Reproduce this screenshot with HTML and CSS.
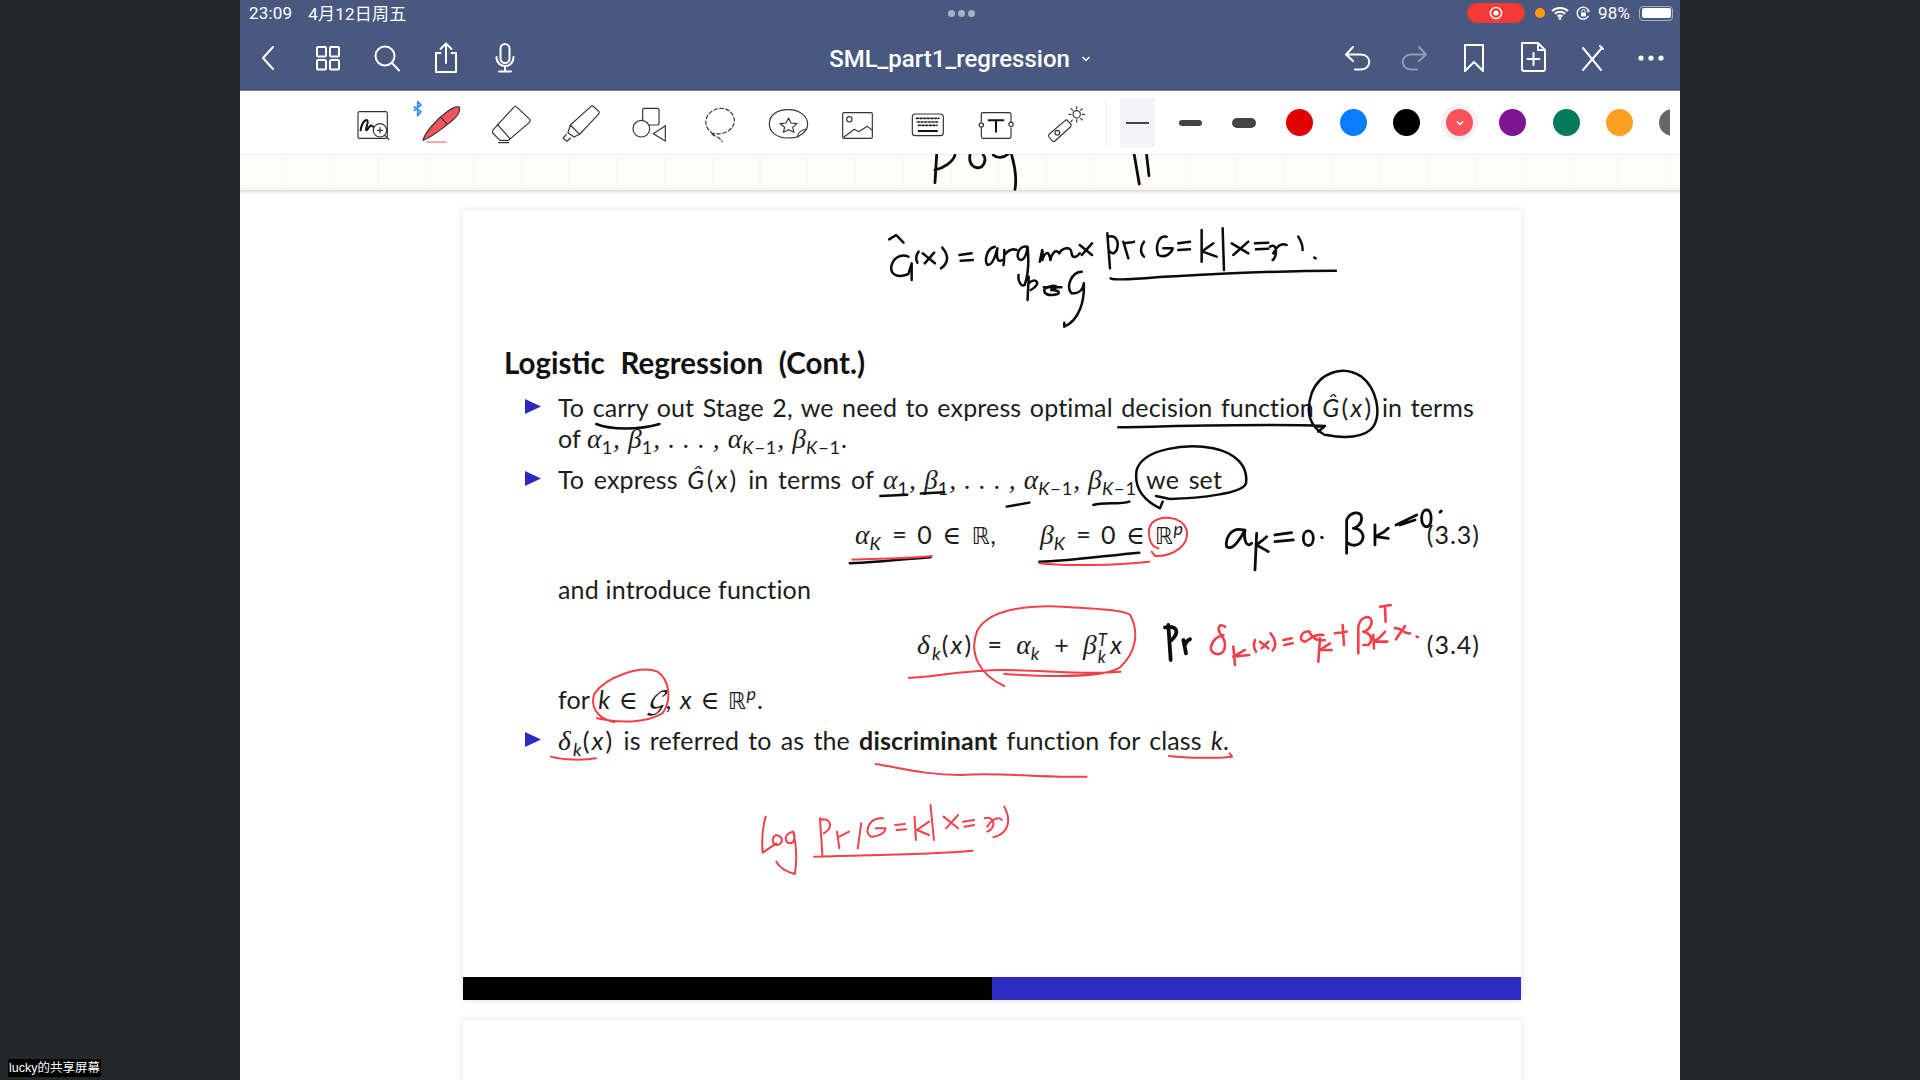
FILE: index.html
```html
<!DOCTYPE html>
<html lang="en">
<head>
<meta charset="utf-8">
<title>SML_part1_regression</title>
<link rel="stylesheet" href="styles.css">
</head>
<body>
<div class="ipad">
  <header class="chrome">
    <div class="status">
      <div class="status-left"><span>23:09</span><span class="date">4月12日周五</span></div>
      <div class="dots"><i></i><i></i><i></i></div>
      <div class="status-right">
        <span class="rec"><svg width="14" height="14" viewBox="0 0 14 14"><circle cx="7" cy="7" r="5.6" fill="none" stroke="#fff" stroke-width="1.5"/><circle cx="7" cy="7" r="2.6" fill="#fff"/></svg></span>
        <span class="dot-orange"></span>
        <svg class="wifi" width="18" height="14" viewBox="0 0 18 14"><path d="M1 5C5.500 1 12.500 1 17 5M3.800 7.800C6.800 5.200 11.200 5.200 14.200 7.800M6.500 10.400C8 9.200 10 9.200 11.500 10.400" fill="none" stroke="#fff" stroke-width="2"/><circle cx="9" cy="12.500" r="1.400" fill="#fff"/></svg>
        <svg class="lock" width="15" height="15" viewBox="0 0 15 15"><path d="M12.500 10A6 6 0 1 1 13 5.500" fill="none" stroke="#fff" stroke-width="1.400"/><path d="M13.500 3.500L13 6.500L10.500 5Z" fill="#fff"/><rect x="5" y="6.500" width="5" height="4" rx=".8" fill="#fff"/><path d="M5.800 6.500V5.200a1.700 1.700 0 0 1 3.400 0V6.500" fill="none" stroke="#fff"/></svg>
        <span class="pct">98%</span>
        <span class="battery"><span></span></span>
      </div>
    </div>
    <nav class="nav">
      <div class="nav-group">
        <span class="nav-btn"><svg viewBox="0 0 36 36"><path d="M22 7L12 18L22 29"/></svg></span>
        <span class="nav-btn"><svg viewBox="0 0 36 36"><rect x="7" y="7" width="9" height="9.500" rx="1"/><rect x="20" y="7" width="9" height="9.500" rx="1"/><rect x="7" y="20" width="9" height="9.500" rx="1"/><rect x="20" y="20" width="9" height="9.500" rx="1"/></svg></span>
        <span class="nav-btn"><svg viewBox="0 0 36 36"><circle cx="16" cy="16" r="9.500"/><path d="M23 23L30 30.500"/></svg></span>
        <span class="nav-btn"><svg viewBox="0 0 36 36"><path d="M12.500 13H8V32H28V13H23.500M18 23V4M12.500 9L18 3.500L23.500 9"/></svg></span>
        <span class="nav-btn"><svg viewBox="0 0 36 36"><rect x="13.500" y="4" width="9" height="19" rx="4.500"/><path d="M9.500 17C9.500 29 26.500 29 26.500 17M18 27V31M12 31.500H24"/></svg></span>
      </div>
      <div class="doc-title"><span>SML_part1_regression</span><svg width="10" height="8" viewBox="0 0 10 8"><path d="M1.500 2L5 5.500L8.500 2"/></svg></div>
      <div class="nav-group nav-right">
        <span class="nav-btn"><svg viewBox="0 0 36 36"><path d="M14 7L7 14.500L14 21M7 14.500H22C33 14.500 33 29.500 22 29.500H16"/></svg></span>
        <span class="nav-btn dim"><svg viewBox="0 0 36 36"><path d="M22 7L29 14.500L22 21M29 14.500H14C3 14.500 3 29.500 14 29.500H20"/></svg></span>
        <span class="nav-btn"><svg viewBox="0 0 36 36"><path d="M9 5H27V31L18 22L9 31Z"/></svg></span>
        <span class="nav-btn"><svg viewBox="0 0 36 36"><path d="M7 3H23L30 10V29Q30 31 28 31H9Q7 31 7 29ZM23 3V10H30M18.500 13V25M12.500 19H24.500"/></svg></span>
        <span class="nav-btn"><svg viewBox="0 0 36 36"><path d="M9 8L27 30M27 9L9 30M26 6L29 9"/></svg></span>
        <span class="nav-btn"><svg viewBox="0 0 36 36"><circle class="solid" cx="8" cy="18" r="2.600"/><circle class="solid" cx="18" cy="18" r="2.600"/><circle class="solid" cx="28" cy="18" r="2.600"/></svg></span>
      </div>
    </nav>
  </header>

  <div class="toolbar">
    <div class="tools">
      <svg class="tool" viewBox="9 6 180 180"><rect x="54" y="62" width="88" height="80" rx="5"/><path class="thick" d="M62 118C65 90 85 78 83 95C80 110 74 122 82 116C90 105 92 98 100 108"/><circle class="fillw" cx="120" cy="118" r="20"/><path d="M112 118H128M120 110V126M134 133L147 146"/></svg>
      <svg class="tool" viewBox="217 6 180 180"><path class="blue" d="M224 48L244 62L234 74V32L244 42L224 58"/><path class="pen" d="M250 148C256 125 290 85 322 62C340 48 358 44 360 50C362 62 350 80 330 95C305 115 270 142 250 148Z"/><path d="M250 148C256 125 290 85 322 62C340 48 358 44 360 50C362 62 350 80 330 95C305 115 270 142 250 148ZM305 80L322 100"/><path class="redline" d="M262 153H320"/></svg>
      <svg class="tool" viewBox="425 6 180 180"><path d="M530 46L572 86Q574 90 570 94L510 146Q506 150 500 148H482L460 126Q458 120 462 116L526 46Q528 44 530 46ZM474 100L512 143M478 155H508"/></svg>
      <svg class="tool" viewBox="634 6 180 180"><path d="M760 45L778 62Q780 66 776 70L720 130L692 102L754 46Q757 44 760 45ZM692 102L685 125L703 138L720 130M680 130L670 142L682 151L692 141"/></svg>
      <svg class="tool" viewBox="842 6 180 180"><rect x="910" y="52" width="49" height="50" rx="5"/><circle class="fillw" cx="906" cy="113" r="25"/><path d="M978 104V150L942 128Z"/></svg>
      <svg class="tool" viewBox="1050 6 180 180"><path class="dash" d="M1120 129C1090 110 1090 75 1120 58C1150 42 1183 60 1183 90C1183 115 1150 135 1120 127M1116 130C1125 135 1140 140 1146 152"/></svg>
      <svg class="tool" viewBox="58 6 180 180"><path d="M145 141C110 141 89 122 89 99C89 72 112 56 145 56C180 56 204 75 204 100C204 112 197 125 178 135C170 140 157 141 145 141ZM174 138C174 125 180 118 200 114"/><path d="M147 81L154 96L172 98L159 109L163 124L147 116L131 124L135 109L121 98L139 96Z"/></svg>
      <svg class="tool" viewBox="266 6 180 180"><rect x="310" y="65" width="89" height="77" rx="4"/><circle cx="330" cy="85" r="8"/><path d="M314 138L345 115L358 122L384 106L399 118"/></svg>
      <svg class="tool" viewBox="475 6 180 180"><rect x="518" y="69" width="93" height="65" rx="9"/><path class="keys" d="M530 82H598M533 93H596M536 103H592"/><path class="thick" d="M537 120H592"/></svg>
      <svg class="tool" viewBox="683 6 180 180"><path d="M726 92V70Q726 65 731 65H810Q815 65 815 70V92M726 110V136Q726 142 731 142H810Q815 142 815 136V110"/><circle cx="726" cy="102" r="6.500"/><circle cx="815" cy="100" r="6.500"/><path class="thick" d="M748 88H792M770 88V122"/></svg>
      <svg class="tool" viewBox="891 6 180 180"><path d="M982 86L996 99Q998 104 994 108L948 150Q944 153 940 150L930 138Q927 133 931 129Z"/><circle cx="955" cy="125" r="7"/><circle cx="1013" cy="70" r="11"/><path d="M1013 47V54M1013 86V93M990 70H996M1030 70H1037M996 53L1001 58M1025 82L1030 87M1030 53L1025 58M1000 87L996 92"/></svg>
    </div>
    <span class="sep"></span>
    <div class="strokes">
      <span class="stroke chip"><i class="w1"></i></span>
      <span class="stroke"><i class="w2"></i></span>
      <span class="stroke"><i class="w3"></i></span>
    </div>
    <div class="swatches">
      <span class="swatch"><i class="c-red"></i></span>
      <span class="swatch"><i class="c-blue"></i></span>
      <span class="swatch"><i class="c-black"></i></span>
      <span class="swatch selected"><i class="c-coral"><svg width="10" height="8" viewBox="0 0 10 8"><path d="M2 2.500L5 5.500L8 2.500" fill="none" stroke="#fff" stroke-width="1.500"/></svg></i></span>
      <span class="swatch"><i class="c-purple"></i></span>
      <span class="swatch"><i class="c-green"></i></span>
      <span class="swatch"><i class="c-orange"></i></span>
      <span class="swatch"><i class="c-gray"></i></span>
    </div>
  </div>

  <div class="strip"></div>

  <main class="canvas">
    <article class="slide">
      <div class="slide-body">
        <h1 class="slide-title">Logistic Regression (Cont.)</h1>
        <div class="item first">
          <span class="bullet"></span>
          <div class="item-text">
            <div class="line just w-full">To carry out Stage 2, we need to express optimal decision function <span class="fn"><span class="it">Ĝ</span>(<span class="it">x</span>)</span> in terms</div>
            <div class="line">of <span class="mgroup"><span class="m">α</span><sub>1</sub><span class="m">,</span> <span class="m">β</span><sub>1</sub><span class="m">,</span> <span class="m">.</span> <span class="m">.</span> <span class="m">.</span> <span class="m">,</span> <span class="m">α</span><sub><span class="it">K</span>−1</sub><span class="m">,</span> <span class="m">β</span><sub><span class="it">K</span>−1</sub></span>.</div>
          </div>
        </div>
        <div class="item second">
          <span class="bullet"></span>
          <div class="item-text">
            <div class="line just w-b2">To express <span class="fn"><span class="it">Ĝ</span>(<span class="it">x</span>)</span> in terms of <span class="mgroup"><span class="m">α</span><sub>1</sub><span class="m">,</span> <span class="m">β</span><sub>1</sub><span class="m">,</span> <span class="m">.</span> <span class="m">.</span> <span class="m">.</span> <span class="m">,</span> <span class="m">α</span><sub><span class="it">K</span>−1</sub><span class="m">,</span> <span class="m">β</span><sub><span class="it">K</span>−1</sub></span> we set</div>
            <div class="line eq eq33">
              <span class="eq-a"><span class="m">α</span><sub><span class="it">K</span></sub> = 0 <span class="in">∈</span> <span class="bb">ℝ</span>,</span>
              <span class="eq-b"><span class="m">β</span><sub><span class="it">K</span></sub> = 0 <span class="in">∈</span> <span class="bb">ℝ</span><sup class="it">p</sup></span>
              <span class="eq-num">(3.3)</span>
            </div>
            <div class="line just intro">and introduce function</div>
            <div class="line eq eq34">
              <span class="eq-c"><span class="fn"><span class="m">δ</span><sub><span class="it">k</span></sub>(<span class="it">x</span>)</span> = <span class="m">α</span><sub><span class="it">k</span></sub> + <span class="m">β</span><span class="stack"><span class="it">T</span><span class="it">k</span></span><span class="it">x</span></span>
              <span class="eq-num">(3.4)</span>
            </div>
            <div class="line just forline">for <span class="it">k</span> <span class="in">∈</span> <span class="cal">𝒢</span>, <span class="it">x</span> <span class="in">∈</span> <span class="bb">ℝ</span><sup class="it">p</sup>.</div>
          </div>
        </div>
        <div class="item third">
          <span class="bullet"></span>
          <div class="item-text">
            <div class="line just w-b3"><span class="fn"><span class="m">δ</span><sub><span class="it">k</span></sub>(<span class="it">x</span>)</span> is referred to as the <strong>discriminant</strong> function for class <span class="it">k</span>.</div>
          </div>
        </div>
      </div>
      <div class="slide-foot"><span class="foot-black"></span><span class="foot-blue"></span></div>
    </article>
    <article class="slide next"></article>
  </main>

  <svg class="ink" viewBox="240 0 1440 1080" aria-hidden="true">
    <g transform="translate(740 90) scale(.3333)">
      <path d="M590 195L585 278M585 240C610 235 640 215 645 195M690 195C685 225 705 240 725 230C740 215 735 200 730 195M760 195C770 205 790 205 805 192M815 195C825 230 830 270 825 298M1183 195L1198 282M1220 195L1227 257"/>
    </g>
    <g transform="translate(480 200) scale(.408 .3333)">
      <path class="fine" d="M1003 118L1020 105L1038 128M1050 170C1030 160 1012 175 1008 200C1006 225 1025 235 1050 222L1058 190L1058 240M1075 155C1068 165 1068 180 1072 188M1085 160L1115 190M1113 158L1090 190M1133 143C1150 165 1148 190 1130 205M1175 165L1205 160M1178 182L1208 180M1262 140C1240 145 1235 190 1245 195C1258 195 1265 160 1268 145C1265 170 1268 190 1280 180M1285 150C1285 170 1285 185 1283 195M1285 165C1295 150 1305 145 1315 150M1340 140C1320 135 1310 175 1325 180C1335 180 1340 160 1342 140C1345 175 1345 220 1335 255C1325 262 1318 240 1320 225M1372 185L1378 150C1380 155 1378 170 1378 180C1385 155 1395 150 1398 180C1402 160 1410 145 1420 160C1425 145 1450 135 1450 160C1452 175 1460 175 1470 160M1470 135L1500 165M1500 130L1475 165M1345 230L1342 300M1345 250C1360 230 1380 250 1350 270M1385 265C1410 250 1425 260 1400 270C1425 270 1425 285 1400 285C1385 285 1380 275 1385 265M1382 262H1425M1475 215C1450 215 1435 260 1450 280C1470 280 1478 270 1480 250C1482 300 1470 360 1432 380L1432 368"/>
      <path class="fine" d="M285 672C320 690 390 690 440 672"/>
    </g>
    <g transform="translate(1000 200) scale(.3333)">
      <path class="fine" d="M322 100L330 205M325 110C345 105 360 120 350 150C340 165 335 160 330 155M370 125L385 175M375 130C385 125 395 130 402 125M432 125C420 140 420 160 432 170M500 110C475 105 465 140 475 165C495 175 515 160 518 145L490 145M535 130L570 125M535 150L570 148M605 90L605 185M640 130C620 145 610 150 608 155L650 170M668 85L672 210M695 130L745 160M745 125L700 165M765 130L805 128M768 148L805 146M810 140C835 125 830 175 818 180M820 160C835 130 850 130 860 135M895 110C905 125 908 140 908 150M943 173L947 175M332 235C345 242 400 238 470 232C600 225 800 212 1008 212"/>
      <path class="fine" d="M975 705C930 680 915 640 935 580C960 515 1030 495 1085 530C1130 565 1145 640 1120 680C1095 715 1030 715 980 705M950 680L975 678L955 695M355 682C500 680 800 670 975 678M488 905L480 925C440 905 400 870 410 810C430 745 560 730 640 745C710 760 745 800 738 850C730 880 600 895 510 897L468 888M20 920L88 908M280 915C310 905 360 915 388 905M118 1085C200 1085 330 1065 418 1058"/>
      <path class="red" d="M475 1045C445 1040 440 990 455 970C480 945 545 945 560 990C570 1035 520 1070 465 1068L455 1055M118 1090C200 1100 350 1095 448 1085"/>
      <path d="M730 990C690 980 675 1020 680 1040C700 1055 725 1010 735 990C730 1020 740 1045 755 1030M770 1000L765 1110M800 1010C785 1025 775 1030 770 1035L805 1055M825 1005L875 998M825 1025L880 1020M925 993C905 993 905 1037 925 1037C945 1037 945 993 925 993ZM965 1012L967 1013M1040 1060L1040 960C1050 935 1085 930 1085 955C1085 975 1065 985 1060 985C1085 985 1100 1010 1080 1030C1065 1040 1050 1035 1045 1030M1125 1035L1125 975M1165 985C1145 1005 1130 1005 1128 1010L1165 1015M1188 975L1250 945M1200 975L1245 960M1280 930C1260 930 1260 980 1280 980C1298 980 1298 930 1280 930ZM1320 937L1324 933"/>
    </g>
    <g transform="scale(1.2245)">
      <path class="fine" d="M694 460C720 459 745 456 760 455M719 405L741 404M752 403L771 402"/>
      <path class="red" d="M696 457C720 456 745 456 761 454"/>
    </g>
    <g transform="translate(500 560) scale(.4848 .3333)">
      <path class="red" d="M1040 378C990 345 965 280 985 210C1010 150 1080 135 1160 140C1220 145 1290 150 1300 165C1320 220 1310 280 1280 320C1260 345 1180 355 1040 342M843 353C880 355 950 330 1040 330C1120 330 1200 345 1280 335M235 487C200 475 185 440 195 400C220 350 290 315 325 335C350 360 355 420 335 460C300 490 245 490 200 475M105 590C130 600 170 602 198 595M1380 588C1420 595 1480 595 1510 590L1505 580M775 612C830 625 880 645 950 645C1040 635 1100 655 1210 650"/>
      <path class="red" d="M548 770C540 810 540 850 542 878L570 850M570 825C560 830 560 855 572 855C585 850 585 830 570 825ZM605 815C585 820 585 850 600 850C610 845 608 825 605 815C612 860 612 910 608 942C590 935 575 920 570 905M660 775L665 885M660 780C680 770 690 800 668 820M695 815L700 865M700 830L720 815M745 790L738 865M790 775C760 770 750 820 765 830C780 830 795 820 795 805L775 805M815 795L835 792M818 810L838 808M855 770L858 840M885 785L860 810L885 825M888 735L895 840M915 770L945 805M945 765L920 805M955 785L978 780M958 800L978 795M1000 775C1020 765 1025 805 1005 815M1005 800C1015 775 1030 770 1035 780M1040 740C1055 780 1050 820 1018 832M648 890C750 885 880 885 975 872"/>
    </g>
    <g transform="translate(1150 590) scale(.3333)">
      <path class="heavy" d="M55 105L62 210M45 112C80 105 90 125 65 150M100 150L108 190M105 165C110 150 115 150 120 148"/>
      <path class="red thick-red" d="M225 110C210 100 200 110 210 130C225 150 230 165 220 185C205 200 180 190 183 170C190 145 205 140 220 135M250 170L255 225M250 200L298 195M250 200L285 180M315 150C310 165 310 175 318 185M330 155L355 175M355 155L335 175M362 130C378 150 380 170 368 182M400 150L425 145M403 165L428 160M480 125C450 120 445 155 465 155C480 150 490 130 520 135M480 130C490 145 500 155 525 150M510 145L505 215M540 160L510 180L545 180M555 130L590 125M578 105L582 165M625 190L625 110C632 75 665 75 665 95C665 115 645 125 640 125C665 130 670 150 655 165L640 165M670 135L672 175M705 125C690 145 680 150 672 155L712 155M690 50L722 45M705 48L707 95M735 115C750 110 765 135 780 130M765 108C755 125 745 135 738 148M800 140L804 141"/>
    </g>
  </svg>
</div>
<div class="share-tag">lucky的共享屏幕</div>
</body>
</html>
```

FILE: styles.css
```css
* { box-sizing: border-box; }
html, body { margin: 0; height: 1080px; overflow: hidden; }
body { background: #212827; display: flex; justify-content: center; font-family: "Lato", "Noto Sans CJK SC", sans-serif; }
.ipad { width: 1440px; height: 1080px; overflow: hidden; background: #fff; display: flex; flex-direction: column; flex: none; }

.chrome { height: 91px; background: #49587f; color: #fff; flex: none; position: relative; z-index: 3; font-family: "Roboto", "Noto Sans CJK SC", sans-serif; border-bottom: 1px solid #6f7a94; }
.status { height: 26px; display: grid; grid-template-columns: 1fr auto 1fr; align-items: center; padding: 0 7px 0 9px; font-size: 17px; letter-spacing: .2px; }
.status-left { display: flex; align-items: center; gap: 16px; }
.date { margin-top: -2px; }
.dots { display: flex; gap: 3px; }
.dots i { width: 7px; height: 7px; border-radius: 50%; background: #a7afc4; }
.status-right { display: flex; justify-content: flex-end; align-items: center; }
.rec { width: 58px; height: 20px; border-radius: 10px; background: #f33a36; display: flex; align-items: center; justify-content: center; }
.dot-orange { width: 10px; height: 10px; border-radius: 50%; background: #ff9a0d; margin-left: 10px; }
.wifi { margin-left: 6px; }
.lock { margin-left: 7px; }
.pct { margin-left: 7px; font-size: 17px; width: 38px; }
.battery { width: 34px; height: 15px; margin-left: 3px; border: 1px solid #a5aec5; border-radius: 4px; padding: 1.5px; }
.battery span { display: block; width: 100%; height: 100%; background: #fff; border-radius: 2px; }

.nav { height: 64px; display: grid; grid-template-columns: 1fr auto 1fr; align-items: center; }
.nav-group { display: flex; }
.nav-right { justify-content: flex-end; }
.nav-btn { width: 58.800px; height: 40px; display: flex; align-items: center; justify-content: center; }
.nav-btn svg { width: 36px; height: 36px; fill: none; stroke: #fff; stroke-width: 2; stroke-linecap: round; stroke-linejoin: round; }
.nav-btn svg .solid { fill: #fff; stroke: none; }
.nav-btn.dim { opacity: .4; }
.doc-title { display: flex; align-items: center; gap: 11px; font-size: 24px; font-weight: 500; padding-top: 1px; }
.doc-title svg { fill: none; stroke: #fff; stroke-width: 1.500; }

.toolbar { height: 63px; background: #fff; flex: none; display: flex; align-items: center; padding-left: 98px; position: relative; z-index: 3; }
.tools { display: flex; }
.tool { width: 60px; height: 60px; margin: 0 4.700px; flex: none; fill: none; stroke: #333; stroke-width: 3.500; stroke-linecap: round; stroke-linejoin: round; }
.tool .thick { stroke-width: 6; stroke: #111; }
.tool .fillw { fill: #fff; }
.tool .blue { stroke: #2b8cf5; stroke-width: 5; }
.tool .pen { fill: #f2555b; stroke: none; }
.tool .redline { stroke: #e8545a; stroke-width: 3.500; }
.tool .dash { stroke-dasharray: 11 7; }
.tool .keys { stroke-dasharray: 6 5; stroke-width: 5; stroke: #222; }
.sep { width: 1px; height: 48px; background: #f0f0f0; margin: 0 4px 0 5px; flex: none; }
.strokes { display: flex; flex: none; }
.stroke { width: 53px; height: 63px; display: flex; align-items: center; justify-content: center; }
.stroke i { display: block; background: #444; }
.stroke.chip { background: linear-gradient(#f3f3f7, #f3f3f7) center / 35px 49px no-repeat; }
.w1 { width: 23px; height: 2px; }
.w2 { width: 23px; height: 6px; border-radius: 3px; }
.w3 { width: 24px; height: 10px; border-radius: 5px; }
.swatches { display: flex; width: 397px; margin-left: 3px; overflow: hidden; flex: none; }
.swatch { width: 53.300px; height: 63px; flex: none; display: flex; align-items: center; justify-content: center; }
.swatch i { width: 27px; height: 27px; border-radius: 50%; display: flex; align-items: center; justify-content: center; }
.swatch.selected { background: radial-gradient(circle, #f1f1f6 18px, transparent 18.500px); }
.c-red { background: #e00000; }
.c-blue { background: #0a7cff; }
.c-black { background: #000; }
.c-coral { background: #fb535c; }
.c-purple { background: #7e1490; }
.c-green { background: #047a5c; }
.c-orange { background: #ffa020; }
.c-gray { background: #666; }

.strip { height: 36px; flex: none; position: relative; z-index: 1; background-color: #fffefb; background-image: linear-gradient(to right, #f7f3df 1px, transparent 1px), linear-gradient(#f7f3df, #f7f3df), linear-gradient(#efeee2, #efeee2); background-size: 47.700px 100%, 100% 1px, 100% 1px; background-position: 42.600px 0, 0 34px, 0 0; background-repeat: repeat-x, no-repeat, no-repeat; box-shadow: 0 2px 3px rgba(0,0,0,.16); }

.canvas { flex: 1; padding: 20px 0 0 223px; background: #fff; min-height: 0; }
.slide { width: 1058px; height: 790px; background: #fff; box-shadow: 0 0 6px rgba(0,0,0,.13); display: flex; flex-direction: column; }
.slide.next { margin-top: 20px; height: 300px; }
.slide-body { flex: 1; padding: 135px 41px 0; color: #1c1c1c; font-size: 25px; letter-spacing: .15px; }
.slide-title { margin: 0 0 11px; font-size: 29.500px; font-weight: 700; line-height: 36px; color: #111; width: 361px; text-align: justify; text-align-last: justify; letter-spacing: 0; }
.item { display: flex; }
.second { margin-top: 10px; }
.third { margin-top: 10px; }
.bullet { width: 16px; height: 15px; margin: 7px 17px 0 21px; background: #2b2bbf; clip-path: polygon(0 0, 100% 50%, 0 100%); flex: none; }
.item-text { flex: 1; }
.line { height: 31px; line-height: 31px; white-space: nowrap; }
.just { text-align: justify; text-align-last: justify; white-space: normal; }
.w-full { width: 916px; }
.w-b2 { width: 664px; }
.w-b3 { width: 671px; }
.fn { letter-spacing: 2.300px; }
.mgroup { display: inline-block; width: 254px; white-space: normal; text-align: justify; text-align-last: justify; line-height: 31px; vertical-align: baseline; }
.m { font-family: "Liberation Serif", serif; font-style: italic; font-size: 1.100em; font-weight: 400; }
.in { font-family: "Liberation Serif", "DejaVu Serif", serif; font-size: 1.020em; }
.it { font-style: italic; }
.bb { font-family: "DejaVu Sans", sans-serif; font-size: .92em; }
.cal { font-family: "DejaVu Math TeX Gyre", "DejaVu Serif", serif; font-style: italic; }
sub, sup { font-size: .72em; line-height: 0; letter-spacing: 1px; }
.stack { display: inline-flex; flex-direction: column; vertical-align: middle; font-size: .68em; line-height: 17px; margin: 0 3px 0 1px; }
.eq { display: flex; margin-top: 24px; padding-left: 297px; gap: 44px; width: 922px; }
.eq34 { padding-left: 359px; }
.eq-a, .eq-b, .eq-c { white-space: normal; text-align: justify; text-align-last: justify; flex: none; }
.eq-a { width: 141px; }
.eq-b { width: 144px; }
.eq-c { width: 205px; }
.eq-num { margin-left: auto; letter-spacing: 1px; }
.intro { margin-top: 24px; width: 253px; }
.forline { margin-top: 24px; width: 205px; }
.slide-foot { height: 23px; display: flex; flex: none; }
.foot-black { flex: 1; background: #000; }
.foot-blue { flex: 1; background: #2b2bbf; }

.ink { position: absolute; left: 240px; top: 0; width: 1440px; height: 1080px; z-index: 2; pointer-events: none; fill: none; }
.ink path { fill: none; stroke: #0b0b0b; stroke-width: 2.800; stroke-linecap: round; stroke-linejoin: round; vector-effect: non-scaling-stroke; }
.ink path.fine { stroke-width: 2.500; }
.ink path.heavy { stroke-width: 3.800; }
.ink path.red { stroke: #f0404a; stroke-width: 2; }
.ink path.thick-red { stroke-width: 2.600; }

.share-tag { position: absolute; left: 8px; bottom: 3px; background: #000; color: #fff; font-family: "Liberation Sans", "Noto Sans CJK SC", sans-serif; font-size: 12.500px; line-height: 18px; padding: 0 1px; z-index: 4; white-space: nowrap; }
```
